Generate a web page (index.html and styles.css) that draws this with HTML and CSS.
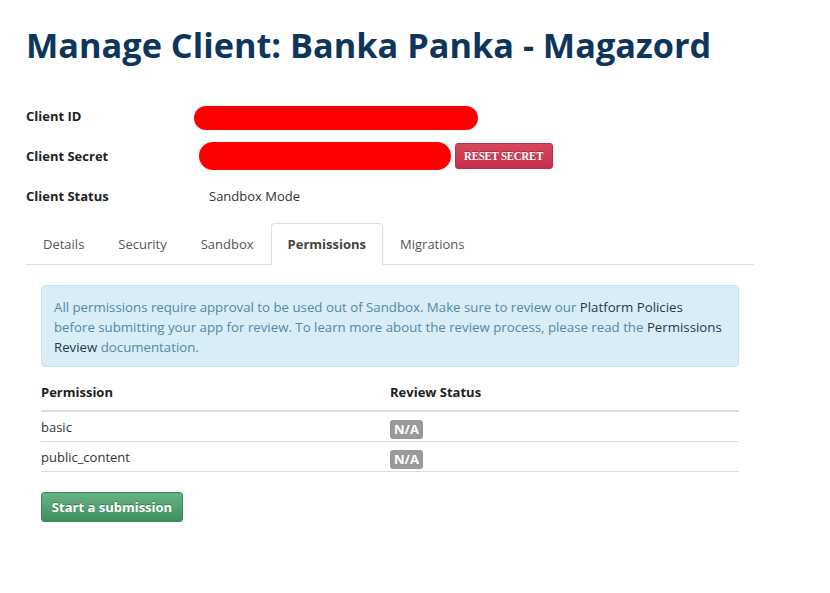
FILE: index.html
```html
<!DOCTYPE html>
<html>
<head>
<meta charset="utf-8">
<link rel="stylesheet" href="styles.css">
</head>
<body>
<div class="page">
  <h1 class="title">Manage Client: Banka Panka - Magazord</h1>
  <div class="info">
    <div class="info-row">
      <div class="info-label">Client ID</div>
      <div class="info-value"><span class="redact redact-id"></span></div>
    </div>
    <div class="info-row">
      <div class="info-label">Client Secret</div>
      <div class="info-value secret"><span class="redact redact-secret"></span><button class="btn-reset"><span class="btn-reset-text">RESET SECRET</span></button></div>
    </div>
    <div class="info-row">
      <div class="info-label">Client Status</div>
      <div class="info-value status">Sandbox Mode</div>
    </div>
  </div>
  <ul class="tabs">
    <li class="tab">Details</li>
    <li class="tab">Security</li>
    <li class="tab">Sandbox</li>
    <li class="tab active">Permissions</li>
    <li class="tab">Migrations</li>
  </ul>
  <div class="tab-content">
    <div class="alert">All permissions require approval to be used out of Sandbox. Make sure to review our <a class="link">Platform Policies</a> before submitting your app for review. To learn more about the review process, please read the <a class="link">Permissions Review</a> documentation.</div>
    <table class="perm-table">
      <thead>
        <tr><th class="col-perm">Permission</th><th>Review Status</th></tr>
      </thead>
      <tbody>
        <tr><td>basic</td><td><span class="badge">N/A</span></td></tr>
        <tr><td>public_content</td><td><span class="badge">N/A</span></td></tr>
      </tbody>
    </table>
    <button class="btn-submit">Start a submission</button>
  </div>
</div>
</body>
</html>
```
FILE: styles.css
```css
html, body { margin: 0; padding: 0; background: #fff; }
body { font-family: "Open Sans", "Noto Sans", sans-serif; font-size: 13px; color: #333; }
.page { padding: 0 76px 0 26px; width: 728px; }
.title { margin: 0; padding-top: 24px; height: 78px; box-sizing: border-box; font-size: 34.3px; font-weight: 700; color: #0e365d; letter-spacing: 0; line-height: 42px; }
.info { padding-top: 18px; }
.info-row { display: flex; align-items: center; height: 40px; }
.info-label { width: 168px; font-weight: 700; color: #222; }
.info-value { display: flex; align-items: center; }
.redact { display: inline-block; background: #ff0000; }
.redact-id { width: 284px; height: 24px; border-radius: 12px; margin-top: 4px; }
.redact-secret { width: 252px; height: 28px; border-radius: 14px; margin-left: 5px; }
.btn-reset { margin-left: 4px; height: 26px; width: 98px; padding: 0; border: 1px solid #b23148; border-radius: 3px; background: linear-gradient(#d9475e, #c2304a); color: #fff; font-family: "Liberation Serif", serif; font-weight: 700; font-size: 13px; text-shadow: 0 -1px 0 rgba(0,0,0,0.25); white-space: nowrap; overflow: hidden; }
.btn-reset-text { display: inline-block; transform: scaleX(0.83); letter-spacing: -0.2px; }
.status { padding-left: 15px; }
.tabs { list-style: none; margin: 7px 0 0 0; padding: 0; display: flex; border-bottom: 1px solid #ddd; height: 41px; }
.tab { padding: 0 16px; line-height: 40px; color: #555; margin-bottom: -1px; border: 1px solid transparent; border-radius: 4px 4px 0 0; }
.tab.active { background: #fff; border-color: #ddd; border-bottom-color: #fff; font-weight: 700; color: #444; }
.tab-content { padding: 20px 15px 0 15px; }
.alert { background: #d9edf7; border: 1px solid #bce8f1; border-radius: 4px; color: #5089a5; line-height: 20px; padding: 11px 14px 9px 12px; font-size: 13.25px; }
.link { color: #22394a; text-decoration: none; }
.perm-table { width: 100%; border-collapse: collapse; margin-top: 7px; }
.perm-table th { text-align: left; font-weight: 700; color: #222; padding: 8px 0 8px 0; border-bottom: 2px solid #ddd; height: 20px; }
.col-perm { width: 349px; }
.perm-table td { padding: 5px 0 4px 0; border-bottom: 1px solid #ddd; height: 20px; line-height: 20px; vertical-align: top; }
.badge { display: inline-block; vertical-align: top; background: #999; color: #fff; font-weight: 700; font-size: 13px; padding: 0 4px; border-radius: 3px; line-height: 19px; margin-top: 3px; margin-bottom: -2px; }
.btn-submit { display: block; margin-top: 20px; height: 30px; width: 142px; padding: 0; border: 1px solid #3d8a57; border-radius: 3px; background: linear-gradient(#68b284, #3f9060); color: #fff; font-family: "Open Sans", sans-serif; font-weight: 700; font-size: 13px; text-shadow: 0 -1px 0 rgba(0,0,0,0.3); }
```
